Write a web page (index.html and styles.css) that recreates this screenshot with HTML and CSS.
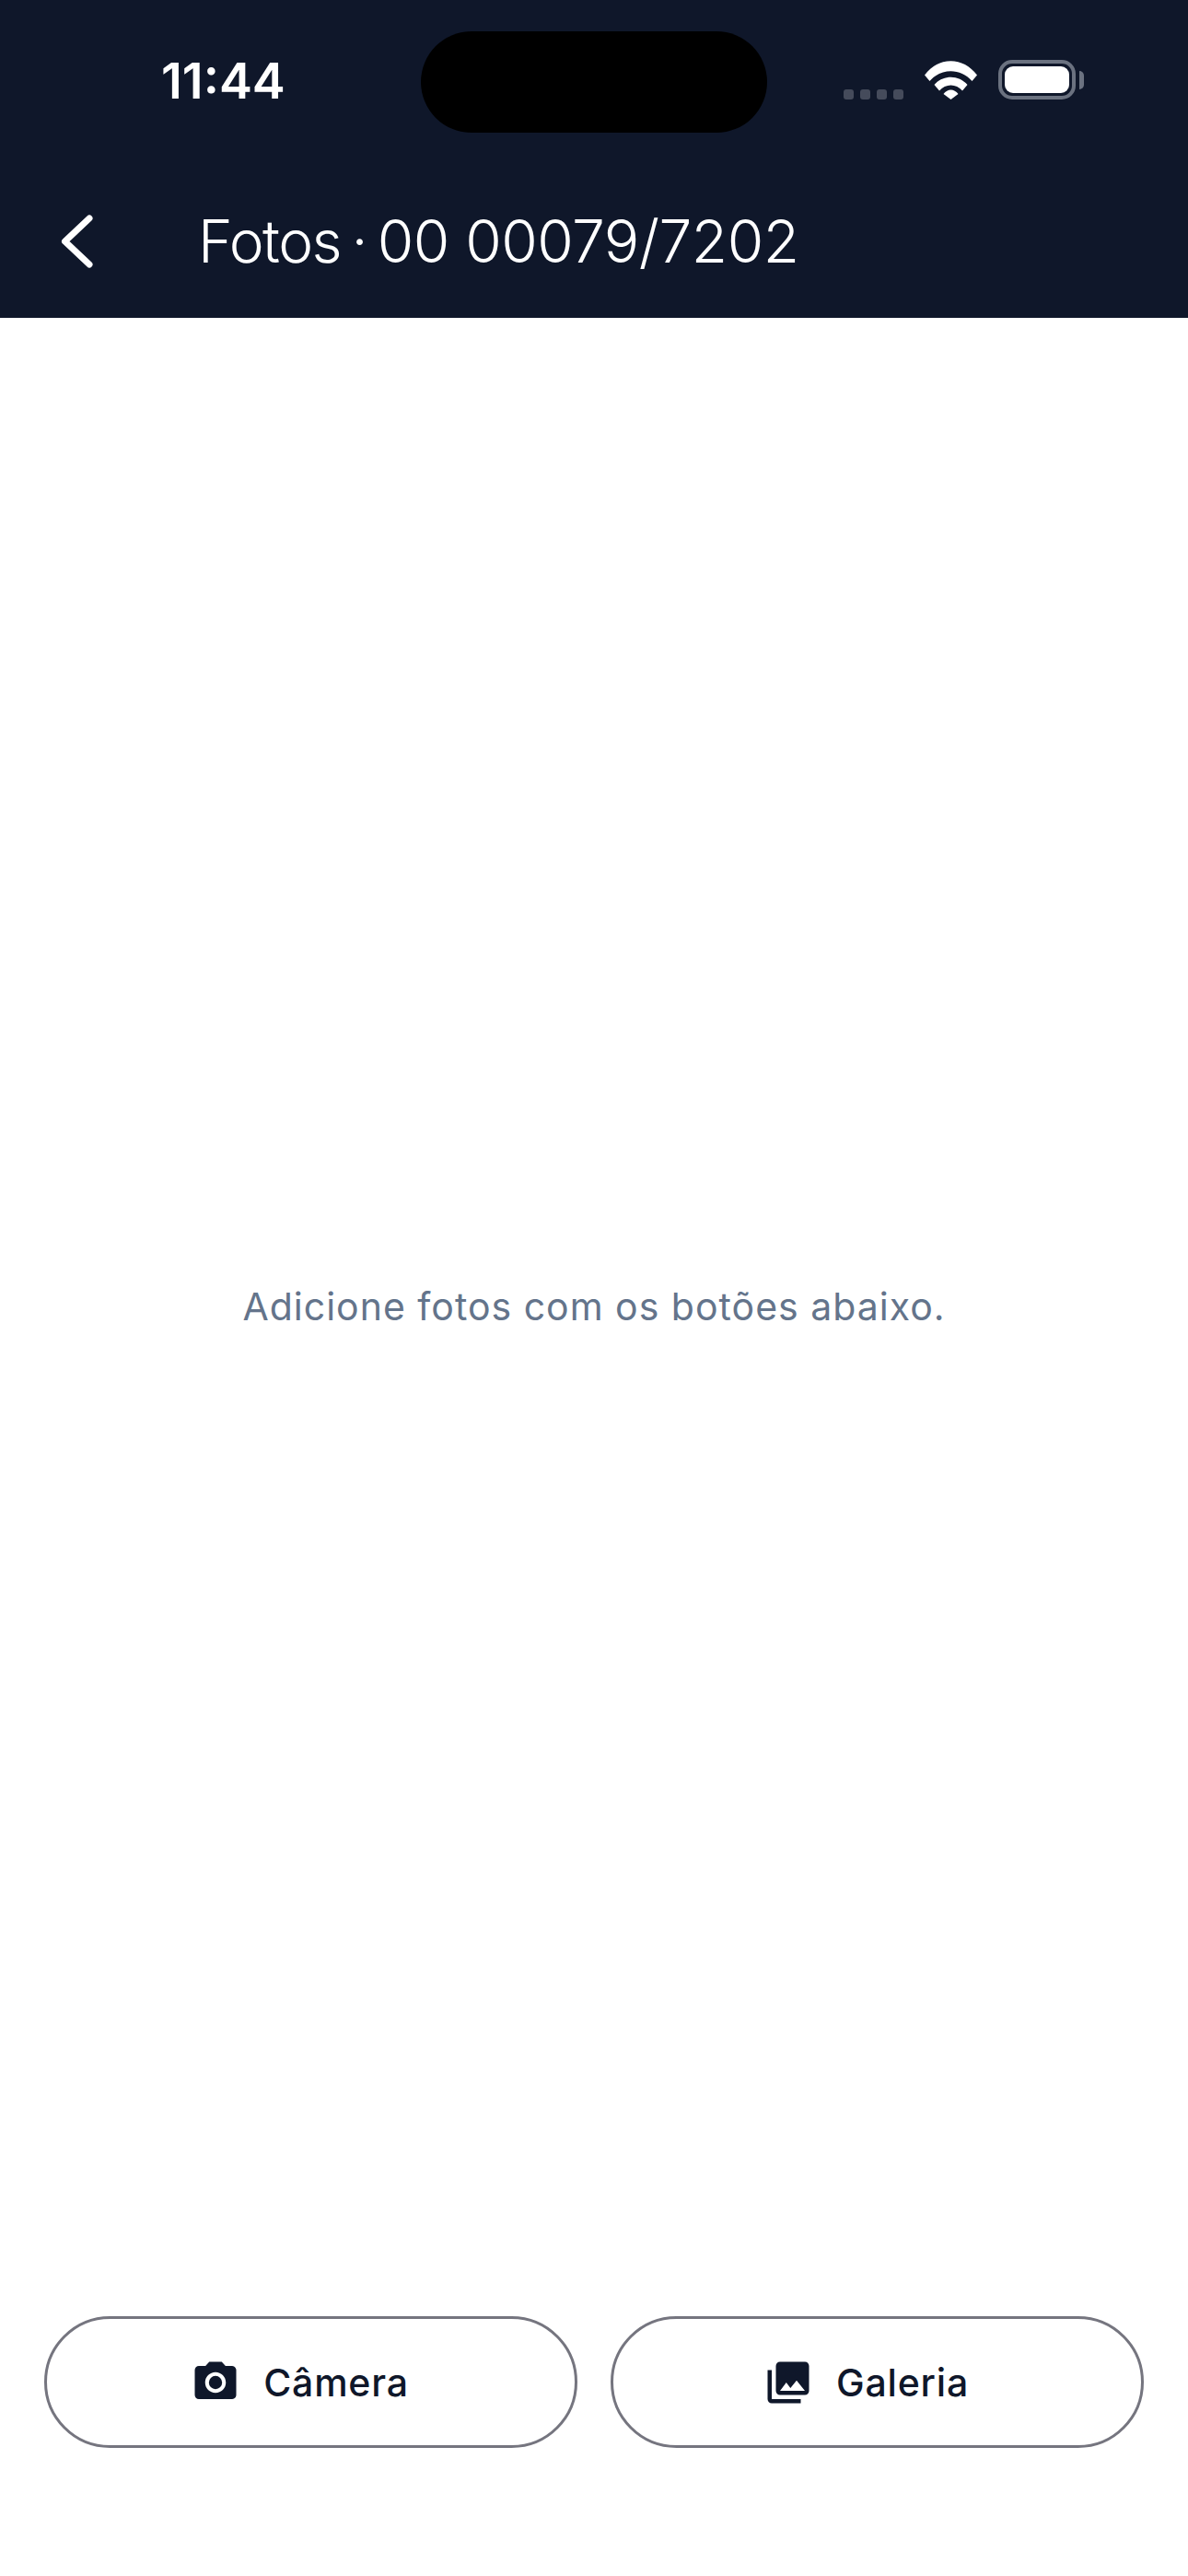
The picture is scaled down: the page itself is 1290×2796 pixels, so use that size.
FILE: index.html
```html
<!DOCTYPE html>
<html lang="pt-BR">
<head>
    <meta charset="UTF-8">
    <meta name="viewport" content="width=device-width, initial-scale=1.0">
    <title>Fotos</title>
    <link rel="stylesheet" href="styles.css">
</head>
<body>
    <div class="page">
        <header class="top">
            <div class="status-bar">
                <div class="status-time">11:44</div>
                <div class="island"></div>
                <div class="status-icons">
                    <div class="signal">
                        <span class="signal-dot"></span>
                        <span class="signal-dot"></span>
                        <span class="signal-dot"></span>
                        <span class="signal-dot"></span>
                    </div>
                    <svg class="wifi" viewBox="0 0 57 42" width="57" height="42">
                        <path fill="#fff" d="M0 15.500 C15 -5 42 -5 57 15.500 L51.500 22 C39 7.500 18 7.500 5.500 22 Z"/>
                        <path fill="#fff" d="M10.500 26 C20 15 37 15 46.500 26 L41 32.500 C34.500 24.500 22.500 24.500 16 32.500 Z"/>
                        <path fill="#fff" d="M20.500 36 C25 30 32 30 36.500 36 L28.500 42 Z"/>
                    </svg>
                    <div class="battery">
                        <div class="battery-body"><div class="battery-fill"></div></div>
                        <div class="battery-cap"></div>
                    </div>
                </div>
            </div>
            <div class="toolbar">
                <svg class="back" viewBox="0 0 40 62" width="40" height="62">
                    <path d="M35 6 L8.500 31 L35 56" fill="none" stroke="#fff" stroke-width="7" stroke-linecap="round" stroke-linejoin="round"/>
                </svg>
                <h1 class="title"><span class="title-name">Fotos · </span>00 00079/7202</h1>
            </div>
        </header>

        <main class="content">
            <p class="empty">Adicione fotos com os botões abaixo.</p>
        </main>

        <footer class="actions">
            <button class="action">
                <svg class="action-icon" viewBox="0 0 24 24">
                    <circle cx="12" cy="12" r="3.2"/>
                    <path d="M9 2L7.170 4H4c-1.100 0-2 .9-2 2v12c0 1.100.9 2 2 2h16c1.100 0 2-.9 2-2V6c0-1.100-.9-2-2-2h-3.170L15 2H9zm3 15c-2.760 0-5-2.240-5-5s2.240-5 5-5 5 2.240 5 5-2.240 5-5 5z"/>
                </svg>
                Câmera
            </button>
            <button class="action">
                <svg class="action-icon" viewBox="0 0 24 24">
                    <path d="M22 16V4c0-1.100-.9-2-2-2H8c-1.100 0-2 .9-2 2v12c0 1.100.9 2 2 2h12c1.100 0 2-.9 2-2zm-11-4l2.030 2.710L16 11l4 5H8l3-4zM2 6v14c0 1.100.9 2 2 2h14v-2H4V6H2z"/>
                </svg>
                Galeria
            </button>
        </footer>
    </div>
</body>
</html>
```

FILE: styles.css
```css
* {
    box-sizing: border-box;
}
body {
    margin: 0;
    background: #fff;
    font-family: Inter, "Noto Sans", sans-serif;
    color: #0f172a;
}
.page {
    display: flex;
    flex-direction: column;
    height: 2796px;
}
.top {
    background: #0f172a;
    color: #fff;
}
.status-bar {
    display: grid;
    grid-template-columns: 1fr 376px 1fr;
    height: 178px;
    padding-top: 34px;
}
.status-time {
    height: 110px;
    padding-left: 175px;
    font-size: 54px;
    font-weight: 600;
    line-height: 108px;
}
.island {
    height: 110px;
    border-radius: 55px;
    background: #000;
}
.status-icons {
    display: flex;
    align-items: flex-end;
    height: 74px;
    padding-left: 83px;
}
.signal {
    display: flex;
    gap: 7px;
    margin-right: 23px;
}
.signal-dot {
    width: 11px;
    height: 11px;
    border-radius: 3px;
    background: #454b5b;
}
.wifi {
    display: block;
    margin-right: 23px;
}
.battery {
    display: flex;
    align-items: center;
    gap: 4px;
}
.battery-body {
    width: 84px;
    height: 43px;
    padding: 3px;
    border: 4px solid #6b7280;
    border-radius: 15px;
}
.battery-fill {
    height: 100%;
    border-radius: 9px;
    background: #fff;
}
.battery-cap {
    width: 5px;
    height: 20px;
    border-radius: 0 5px 5px 0;
    background: #6b7280;
}
.toolbar {
    display: flex;
    align-items: center;
    height: 167px;
    padding-left: 62px;
}
.back {
    display: block;
}
.title {
    margin: 0 0 0 113px;
    font-size: 64px;
    font-weight: 300;
    letter-spacing: -0.5px;
    white-space: nowrap;
}
.title-name {
    letter-spacing: -1.5px;
    word-spacing: -5px;
}
.content {
    flex: 1;
    display: flex;
    align-items: center;
    justify-content: center;
}
.empty {
    margin: 0;
    font-size: 41px;
    letter-spacing: 1px;
    color: #64748b;
}
.actions {
    display: flex;
    gap: 36px;
    padding: 24px 48px 139px;
}
.action {
    flex: 1;
    display: flex;
    align-items: center;
    justify-content: center;
    gap: 25px;
    height: 143px;
    padding: 0 24px 0 0;
    border: 3px solid #75757f;
    border-radius: 72px;
    background: #fff;
    font-family: inherit;
    font-size: 41px;
    font-weight: 450;
    letter-spacing: 0.8px;
    color: #0f172a;
}
.action-icon {
    width: 54px;
    height: 54px;
    fill: #0f172a;
}
```
